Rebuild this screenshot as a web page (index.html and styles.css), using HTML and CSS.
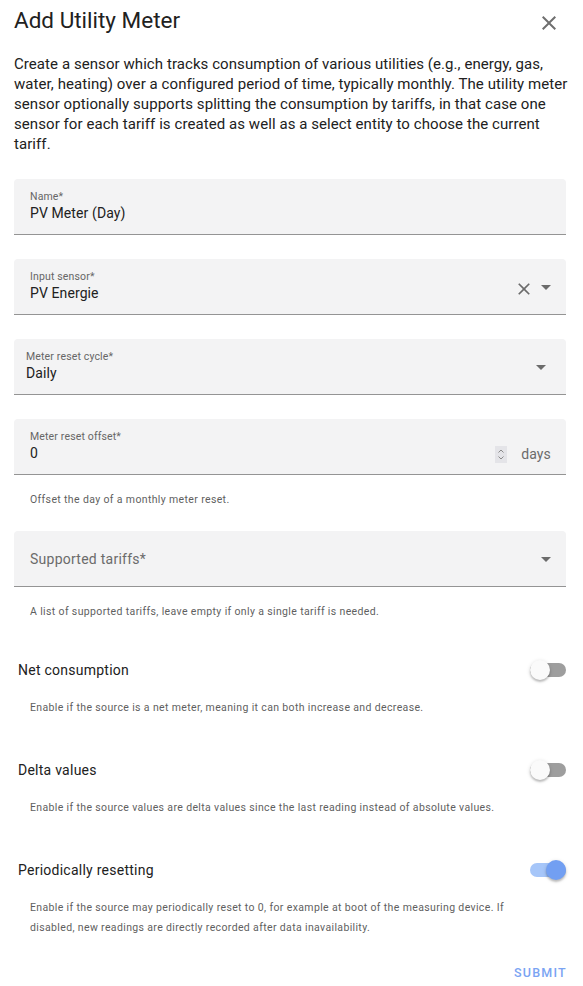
FILE: index.html
```html
<!DOCTYPE html>
<html lang="en">
<head>
<meta charset="utf-8">
<title>Add Utility Meter</title>
<link rel="stylesheet" href="styles.css">
</head>
<body>
<div class="dialog">
  <header class="head">
    <h2 class="title">Add Utility Meter</h2>
    <span class="close" aria-label="Close">
      <svg width="24" height="24" viewBox="0 0 24 24"><path d="M19 6.41L17.59 5 12 10.59 6.41 5 5 6.41 10.59 12 5 17.59 6.41 19 12 13.41 17.59 19 19 17.59 13.41 12z" fill="#6f6f6f"/></svg>
    </span>
  </header>

  <p class="desc">Create a sensor which tracks consumption of various utilities (e.g., energy, gas, water, heating) over a configured period of time, typically monthly. The utility meter sensor optionally supports splitting the consumption by tariffs, in that case one sensor for each tariff is created as well as a select entity to choose the current tariff.</p>

  <div class="field">
    <div class="txt">
      <span class="label">Name*</span>
      <span class="value">PV Meter (Day)</span>
    </div>
  </div>

  <div class="field gap">
    <div class="txt">
      <span class="label">Input sensor*</span>
      <span class="value">PV Energie</span>
    </div>
    <svg class="clear" width="20" height="20" viewBox="0 0 24 24"><path d="M19 6.41L17.59 5 12 10.59 6.41 5 5 6.41 10.59 12 5 17.59 6.41 19 12 13.41 17.59 19 19 17.59 13.41 12z" fill="#6b6b6b"/></svg>
    <svg class="arrow" width="10" height="5" viewBox="0 0 10 5"><polygon points="0,0 10,0 5,5" fill="#6b6b6b"/></svg>
  </div>

  <div class="field gap select">
    <div class="txt">
      <span class="label">Meter reset cycle*</span>
      <span class="value">Daily</span>
    </div>
    <svg class="arrow" width="10" height="5" viewBox="0 0 10 5"><polygon points="0,0 10,0 5,5" fill="#6b6b6b"/></svg>
  </div>

  <div class="field gap">
    <div class="txt">
      <span class="label">Meter reset offset*</span>
      <span class="value">0</span>
    </div>
    <span class="spin">
      <svg width="12" height="17" viewBox="0 0 12 17"><path d="M3.5 6.5 6 4 8.5 6.5M3.5 10.5 6 13 8.5 10.5" fill="none" stroke="#8a8a8a" stroke-width="1"/></svg>
    </span>
    <span class="suffix">days</span>
  </div>
  <p class="helper">Offset the day of a monthly meter reset.</p>

  <div class="field gap2">
    <div class="txt">
      <span class="placeholder">Supported tariffs*</span>
    </div>
    <svg class="arrow" width="10" height="5" viewBox="0 0 10 5"><polygon points="0,0 10,0 5,5" fill="#6b6b6b"/></svg>
  </div>
  <p class="helper">A list of supported tariffs, leave empty if only a single tariff is needed.</p>

  <section class="setting first">
    <div class="row">
      <span class="name">Net consumption</span>
      <span class="switch"><span class="track"></span><span class="thumb"></span></span>
    </div>
    <p class="helper tight">Enable if the source is a net meter, meaning it can both increase and decrease.</p>
  </section>

  <section class="setting">
    <div class="row">
      <span class="name">Delta values</span>
      <span class="switch"><span class="track"></span><span class="thumb"></span></span>
    </div>
    <p class="helper tight">Enable if the source values are delta values since the last reading instead of absolute values.</p>
  </section>

  <section class="setting">
    <div class="row">
      <span class="name">Periodically resetting</span>
      <span class="switch on"><span class="track"></span><span class="thumb"></span></span>
    </div>
    <p class="helper tight">Enable if the source may periodically reset to 0, for example at boot of the measuring device. If disabled, new readings are directly recorded after data inavailability.</p>
  </section>

  <div class="actions">
    <span class="submit">SUBMIT</span>
  </div>
</div>
</body>
</html>
```

FILE: styles.css
```css
html, body {
  margin: 0;
  padding: 0;
  background: #ffffff;
}

body {
  font-family: Roboto, "Liberation Sans", sans-serif;
  color: #212121;
  font-size: 14px;
}

.dialog {
  width: 552px;
  padding: 0 17px 0 14px;
}

.head {
  display: flex;
  justify-content: space-between;
  align-items: flex-start;
  height: 40px;
}

.title {
  margin: 0;
  font-size: 22.5px;
  font-weight: 400;
  line-height: 40px;
  color: #212121;
}

.close {
  display: block;
  width: 24px;
  height: 24px;
  margin-top: 11px;
  margin-right: 5px;
}

.close svg {
  display: block;
}

.desc {
  margin: 14px -3px 0 0;
  font-size: 15px;
  letter-spacing: 0.07px;
  line-height: 20px;
  color: #212121;
}

.field {
  box-sizing: border-box;
  height: 56px;
  margin-top: 25px;
  display: flex;
  align-items: center;
  padding: 0 15px 0 16px;
  background: #f3f3f4;
  border-bottom: 1px solid #949494;
  border-radius: 4px 4px 0 0;
}

.field.gap {
  margin-top: 24px;
}

.field.gap2 {
  margin-top: 21px;
}

.field.select {
  padding-left: 12px;
  padding-right: 20px;
}

.txt {
  flex: 1;
  display: flex;
  flex-direction: column;
  min-width: 0;
  margin-top: 1px;
}

.label {
  font-size: 10.5px;
  letter-spacing: 0.15px;
  line-height: 12px;
  color: #666666;
}

.value {
  font-size: 14px;
  letter-spacing: 0.1px;
  line-height: 20px;
  color: #212121;
}

.placeholder {
  font-size: 14px;
  letter-spacing: 0.25px;
  line-height: 20px;
  color: #6b6b6b;
}

.clear {
  display: block;
  margin-right: 7px;
  margin-top: 4px;
}

.arrow {
  display: block;
  margin-top: 2px;
}

.spin {
  display: block;
  width: 12px;
  height: 17px;
  background: #e4e4e8;
  margin-right: 14px;
  margin-top: 15px;
}

.spin svg {
  display: block;
}

.suffix {
  font-size: 14px;
  letter-spacing: 0.15px;
  color: #6b6b6b;
  line-height: 20px;
  margin-top: 15px;
}

.helper {
  margin: 15px 0 0 0;
  padding: 0 24px 0 16px;
  font-size: 10.5px;
  letter-spacing: 0.36px;
  line-height: 20px;
  color: #5f5f5f;
}

.helper.tight {
  margin-top: 4px;
}

.setting {
  margin-top: 28px;
}

.setting.first {
  margin-top: 24px;
}

.row {
  height: 48px;
  display: flex;
  align-items: center;
  justify-content: space-between;
  padding-left: 4px;
}

.name {
  font-size: 14px;
  letter-spacing: 0.25px;
  color: #212121;
}

.switch {
  position: relative;
  display: block;
  width: 36px;
  height: 20px;
}

.track {
  position: absolute;
  left: 0;
  top: 3px;
  width: 36px;
  height: 14px;
  border-radius: 7px;
  background: #9e9e9e;
}

.thumb {
  position: absolute;
  left: 0;
  top: 0;
  width: 20px;
  height: 20px;
  border-radius: 50%;
  background: #fafafa;
  box-shadow: 0 2px 2px rgba(0, 0, 0, 0.2), 0 1px 4px rgba(0, 0, 0, 0.14);
}

.switch.on .track {
  background: #a6c6f9;
}

.switch.on .thumb {
  left: 16px;
  background: #729ff2;
}

.actions {
  display: flex;
  justify-content: flex-end;
  margin-top: 16px;
  height: 36px;
  align-items: center;
}

.submit {
  font-size: 12.5px;
  font-weight: 500;
  letter-spacing: 1.25px;
  color: #7aa4f3;
  margin-right: -1px;
}
```
